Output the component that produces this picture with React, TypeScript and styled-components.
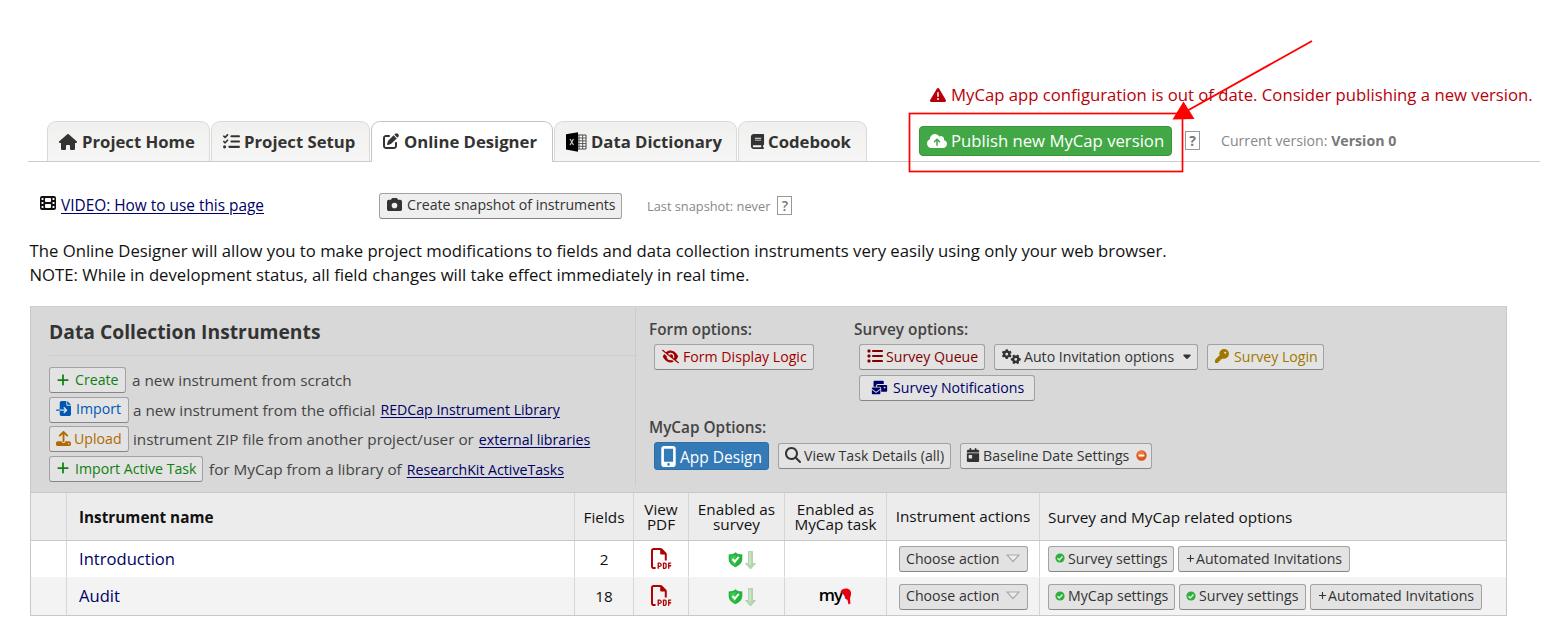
import React from 'react';
import styled, { createGlobalStyle, css } from 'styled-components';
import {
  FaHouse, FaListCheck, FaPenToSquare, FaBook, FaTriangleExclamation, FaCloudArrowUp, FaFilm, FaCamera,
  FaPlus, FaFileImport, FaUpload, FaEyeSlash, FaList, FaGears, FaKey, FaEnvelopesBulk, FaMobileScreenButton,
  FaMagnifyingGlass, FaCalendarDay, FaRegFilePdf, FaCaretDown,
} from 'react-icons/fa6';

const Global = createGlobalStyle`
  *, *::before, *::after { box-sizing: border-box; }
  body { margin: 0; background: #fff; color: #111; font-family: 'Open Sans', 'Noto Sans', sans-serif; font-size: 16.7px; }
  svg { display: block; flex: none; }
`;

const Page = styled.div`
  position: relative;
  width: 1559px;
  height: 641px;
  overflow: hidden;
  padding-top: 82px;
`;

const Txt = styled.span<{ $s?: number; $w?: number; $c?: string; $ml?: number; $up?: number }>`
  white-space: pre;
  ${p => p.$s && css`font-size: ${p.$s}px;`}
  ${p => p.$w && css`font-weight: ${p.$w};`}
  ${p => p.$c && css`color: ${p.$c};`}
  ${p => p.$ml && css`margin-left: ${p.$ml}px;`}
  ${p => p.$up && css`margin-bottom: ${p.$up}px;`}
`;

const Warning = styled.div`
  display: flex;
  align-items: center;
  gap: 5px;
  height: 25px;
  margin-left: 930px;
  color: #b8000b;
`;

const TabBar = styled.nav`
  display: flex;
  align-items: flex-end;
  height: 47px;
  margin: 8px 19px 0 28px;
  padding: 7px 0 0 19px;
  gap: 1px;
  border-bottom: 1px solid #ccc;
`;

const Tab = styled.div<{ $width: number; $active?: boolean; $gap?: number }>`
  display: flex;
  align-items: center;
  width: ${p => p.$width}px;
  height: ${p => (p.$active ? 41 : 40)}px;
  margin-bottom: ${p => (p.$active ? -1 : 0)}px;
  padding: 0 0 ${p => (p.$active ? 2 : 0)}px 11px;
  gap: ${p => p.$gap ?? 5}px;
  border: 1px solid ${p => (p.$active ? '#c4c4c4' : '#d9d9d9')};
  border-bottom: 0;
  border-radius: 9px 9px 0 0;
  background: ${p => (p.$active ? '#fff' : 'linear-gradient(#f0f0ee, #f6f6f6)')};
  color: #333;
  font-weight: 700;
  white-space: nowrap;
`;

const PublishArea = styled.div`
  display: flex;
  align-items: center;
  height: 30px;
  margin: 0 0 5px 51px;
`;

const PublishButton = styled.button`
  display: flex;
  align-items: center;
  gap: 4px;
  width: 253px;
  height: 30px;
  padding: 0 0 1px 7px;
  border: 1px solid #38953c;
  border-radius: 4px;
  background: #42a845;
  color: #fff;
  font: 400 16.72px 'Open Sans', sans-serif;
  white-space: nowrap;
`;

const Help = styled.span<{ $bold?: boolean }>`
  display: flex;
  align-items: center;
  justify-content: center;
  width: 15px;
  height: 19px;
  border: 1px solid #999;
  color: #777;
  font-size: 14px;
  font-weight: ${p => (p.$bold ? 700 : 600)};
`;

const SnapshotRow = styled.div`
  display: flex;
  align-items: center;
  height: 27px;
  margin: 30px 0 0 40px;
`;

const VideoLink = styled.div`
  display: flex;
  align-items: center;
  gap: 5px;
  width: 339px;
  margin-bottom: 1px;
  svg { margin-top: -4px; }
`;

const Link = styled.a<{ $s?: number; $ml?: number }>`
  margin-left: ${p => p.$ml ?? 1}px;
  color: #000066;
  text-decoration: underline;
  text-underline-offset: 2px;
  font-size: ${p => p.$s ?? 14.15}px;
  white-space: pre;
`;

const Button = styled.button<{ $w: number; $c?: string; $bg?: string; $gap?: number; $p?: number; $h?: number; $pb?: number }>`
  display: flex;
  align-items: center;
  flex: none;
  width: ${p => p.$w}px;
  height: ${p => p.$h ?? 26}px;
  gap: ${p => p.$gap ?? 5}px;
  padding: 0 0 ${p => p.$pb ?? 2}px ${p => p.$p ?? 7}px;
  border: 1px solid #a2a2a2;
  border-bottom-color: #858585;
  border-radius: 3px;
  background: ${p => p.$bg ?? '#e3e3e3'};
  color: ${p => p.$c ?? '#333'};
  font: 400 14.15px 'Open Sans', sans-serif;
  white-space: pre;
`;

const Intro = styled.p`
  margin: 20px 0 0 29.5px;
  line-height: 24px;
`;

const Panel = styled.section`
  width: 1477px;
  height: 310px;
  margin: 19px 0 0 30px;
  border: 1px solid #c8c8c8;
  border-top-color: #d0d0d0;
`;

const PanelHead = styled.div`
  display: flex;
  height: 185px;
  background: #d8d8d8;
`;

const CreateColumn = styled.div`
  width: 605px;
  height: 178px;
  margin-top: 1px;
  padding-left: 18px;
  border-right: 1px solid #cccccc;
`;

const PanelTitle = styled.h2`
  height: 48px;
  margin: 0 0 9.5px;
  padding-top: 10px;
  border-bottom: 1px solid #cccccc;
  color: #333;
  font-size: 19.3px;
  font-weight: 700;
  line-height: 27px;
`;

const CreateRow = styled.div`
  display: flex;
  align-items: center;
  height: 29.6px;
  color: #444;
  font-size: 15.3px;
`;

const OptionsColumn = styled.div`
  padding: 9px 0 0 13px;
`;

const OptionGroups = styled.div`
  display: grid;
  grid-template-columns: 205px auto;
  height: 98px;
  align-items: start;
`;

const GroupLabel = styled.div`
  height: 28px;
  color: #444;
  font-size: 15.35px;
  font-weight: 600;
  line-height: 26px;
`;

const ButtonRow = styled.div<{ $gap?: number; $mt?: number }>`
  display: flex;
  align-items: center;
  gap: ${p => p.$gap ?? 9}px;
  margin: ${p => p.$mt ?? 0}px 0 0 5px;
`;

const AppDesign = styled(Button)`
  padding: 1px 0 0 6px;
  border: 1px solid #2e6da4;
  background: #337ab7;
  color: #fff;
  font-size: 15.5px;
  svg { margin: 0 -3px 0 -3px; }
`;

const Row = styled.div<{ $h: number; $bg: string; $line?: string }>`
  display: grid;
  grid-template-columns: 36px 508px 59px 55px 96px 102px 153px 1fr;
  height: ${p => p.$h}px;
  background: ${p => p.$bg};
  border-top: 1px solid ${p => p.$line ?? p.$bg};
`;

const Cell = styled.div<{ $left?: boolean; $pt?: number; $pb?: number }>`
  display: flex;
  align-items: center;
  justify-content: ${p => (p.$left ? 'flex-start' : 'center')};
  padding: ${p => p.$pt ?? 0}px 0 ${p => p.$pb ?? 0}px ${p => (p.$left ? 12 : 0)}px;
  border-right: 1px solid #d6d6d6;
  font-size: 15.3px;
  line-height: 15px;
  text-align: center;
  white-space: pre;
`;

const OptionsCell = styled(Cell)`
  justify-content: flex-start;
  gap: 4px;
  padding-left: 8px;
  border-right: 0;
`;

const Annotation = styled.svg`
  position: absolute;
  left: 0;
  top: 0;
  pointer-events: none;
`;

const ExcelIcon = () => (
  <svg width="21" height="20" viewBox="0 0 21 20">
    <path d="M10 3h10v14H10z" fill="#fff" stroke="#444" />
    <path d="M10 6h10M10 8.800h10M10 11.600h10M10 14.300h10M13 3v14M16.700 3v14" stroke="#555" strokeWidth="1" />
    <path d="M0 2.200 12 .3v19.400L0 17.600z" fill="#000" />
    <path d="m4 7 3.500 6M7.500 7 4 13" stroke="#ccc" strokeWidth="1.200" />
  </svg>
);

const MinusDot = () => (
  <svg width="11" height="11" viewBox="0 0 10 10">
    <circle cx="5" cy="5" r="4.700" fill="#dd5517" />
    <circle cx="4.500" cy="4" r="3" fill="#f49355" opacity=".6" />
    <path d="M2.400 5h5.200" stroke="#fff" strokeWidth="1.700" />
  </svg>
);

const CheckDot = () => (
  <svg width="10" height="10" viewBox="0 0 10 10">
    <circle cx="5" cy="5" r="4.600" fill="#2fae3e" />
    <path d="m2.500 5.200 1.800 1.700 3.200-3.500" fill="none" stroke="#d5f5d5" strokeWidth="1.500" />
  </svg>
);

const ShieldWrap = styled.span`
  margin: 1px 0 0 11px;
`;

const SurveyEnabled = () => (
  <ShieldWrap>
    <svg width="28" height="20" viewBox="0 0 28 20">
      <path d="M.7 4.600C4 4.500 6 3.800 7.500 2.300 9 3.800 11 4.500 14.300 4.600V9c0 4-3.300 6.500-6.800 8.200C4 15.500.7 13 .7 9z" fill="#21b53a" />
      <path d="M2.500 6c2-.1 3.800-.8 5-1.800V15.500C4.500 14 2.500 12 2.500 9z" fill="#52d163" opacity=".65" />
      <path d="m4.500 9 2.300 2.600 4-4.800" fill="none" stroke="#fff" strokeWidth="2.100" />
      <path d="M20.500 1.500h4v12h3L22.500 19l-5-5.500h3z" fill="#b5d8b0" stroke="#a2caa0" strokeWidth=".7" />
      <path d="M22 2.500v12" stroke="#d8ecd5" strokeWidth="1.300" />
    </svg>
  </ShieldWrap>
);

const MyCapLogo = styled.div`
  display: flex;
  align-items: center;
  padding-bottom: 4px;
  color: #000;
  font-size: 17px;
  letter-spacing: -0.8px;
  svg { margin: 4px 0 0 -2px; }
`;

const MyCapMark = () => (
  <MyCapLogo>
    <Txt $w={600}>my</Txt>
    <svg width="12" height="17" viewBox="0 0 12 17">
      <path d="M.5 4C1 1.500 3.500.500 6 .500 9.500.500 11.500 3 11 6.500c-.2 1.800-.9 3-1 4.500l.5 4.500-2 1L7.500 12 5 10.500C5 7 3 6 .5 4z" fill="#e60012" />
    </svg>
  </MyCapLogo>
);

const Choose = () => (
  <Button $w={129} $bg="#e2e2e2" $gap={7} $p={6.5}>
    Choose action
    <svg width="14" height="9" viewBox="0 0 14 9">
      <path d="M1 1h12L7 7.500z" fill="#eee" stroke="#aaa" strokeWidth="1.200" />
    </svg>
  </Button>
);

const Pdf = () => <FaRegFilePdf size={21} color="#b00000" />;

export default function App() {
  return (
    <Page>
      <Global />
      <Warning>
        <FaTriangleExclamation size={16} />
        <Txt $s={16.72}>MyCap app configuration is out of date. Consider publishing a new version.</Txt>
      </Warning>

      <TabBar>
        <Tab $width={163}><FaHouse size={18} /><Txt>Project Home</Txt></Tab>
        <Tab $width={159} $gap={4}><FaListCheck size={17} /><Txt>Project Setup</Txt></Tab>
        <Tab $width={182} $active><FaPenToSquare size={16} /><Txt>Online Designer</Txt></Tab>
        <Tab $width={183} $gap={4}><ExcelIcon /><Txt>Data Dictionary</Txt></Tab>
        <Tab $width={129} $gap={3}><FaBook size={15} /><Txt>Codebook</Txt></Tab>
        <PublishArea>
          <PublishButton><FaCloudArrowUp size={20} />Publish new MyCap version</PublishButton>
          <Txt $ml={13} $up={2}><Help $bold>?</Help></Txt>
          <Txt $s={14.15} $c="#888" $ml={21} $up={2}>Current version: <Txt $w={700} $c="#777">Version 0</Txt></Txt>
        </PublishArea>
      </TabBar>

      <SnapshotRow>
        <VideoLink><FaFilm size={16} /><Link $s={15.4} $ml={0}>VIDEO: How to use this page</Link></VideoLink>
        <Button $w={243} $bg="#efefef" $gap={5}><FaCamera size={15} />Create snapshot of instruments</Button>
        <Txt $s={12.8} $c="#888" $ml={25}>Last snapshot: never</Txt>
        <Txt $ml={7}><Help>?</Help></Txt>
      </SnapshotRow>

      <Intro>
        The Online Designer will allow you to make project modifications to fields and data collection instruments very easily using only your web browser.
        <br />
        NOTE: While in development status, all field changes will take effect immediately in real time.
      </Intro>

      <Panel>
        <PanelHead>
          <CreateColumn>
            <PanelTitle>Data Collection Instruments</PanelTitle>
            <CreateRow>
              <Button $w={77} $p={6} $pb={1} $c="#108010"><FaPlus size={14} />Create</Button>
              <Txt $ml={6}>a new instrument from scratch</Txt>
            </CreateRow>
            <CreateRow>
              <Button $w={80} $p={6} $c="#0056b3"><FaFileImport size={15} />Import</Button>
              <Txt $ml={4}>a new instrument from the official </Txt><Link>REDCap Instrument Library</Link>
            </CreateRow>
            <CreateRow>
              <Button $w={80} $p={6} $pb={1} $c="#b06a00" $gap={3}><FaUpload size={15} />Upload</Button>
              <Txt $ml={4}>instrument ZIP file from another project/user or </Txt><Link>external libraries</Link>
            </CreateRow>
            <CreateRow>
              <Button $w={154} $p={6} $c="#108010"><FaPlus size={14} />Import Active Task</Button>
              <Txt $ml={6}>for MyCap from a library of </Txt><Link>ResearchKit ActiveTasks</Link>
            </CreateRow>
          </CreateColumn>

          <OptionsColumn>
            <OptionGroups>
              <div>
                <GroupLabel>Form options:</GroupLabel>
                <ButtonRow><Button $w={160} $c="#a00000" $gap={4}><FaEyeSlash size={17} />Form Display Logic</Button></ButtonRow>
              </div>
              <div>
                <GroupLabel>Survey options:</GroupLabel>
                <ButtonRow>
                  <Button $w={126} $c="#800000" $gap={3}><FaList size={16} />Survey Queue</Button>
                  <Button $w={204} $gap={3}><FaGears size={19} />Auto Invitation options <FaCaretDown size={12} /></Button>
                  <Button $w={117} $c="#a07800"><FaKey size={14} />Survey Login</Button>
                </ButtonRow>
                <ButtonRow $mt={5}>
                  <Button $w={176} $c="#000066" $p={11}><FaEnvelopesBulk size={17} />Survey Notifications</Button>
                </ButtonRow>
              </div>
            </OptionGroups>
            <GroupLabel>MyCap Options:</GroupLabel>
            <ButtonRow>
              <AppDesign $w={115} $h={28} $gap={4}><FaMobileScreenButton size={21} />App Design</AppDesign>
              <Button $w={173} $p={6} $gap={3}><FaMagnifyingGlass size={16} />View Task Details (all)</Button>
              <Button $w={192} $p={5} $gap={3}><FaCalendarDay size={14} />Baseline Date Settings <MinusDot /></Button>
            </ButtonRow>
          </OptionsColumn>
        </PanelHead>

        <Row $h={48} $bg="#ececec" $line="#c8c8c8">
          <Cell />
          <Cell $left $pt={2}><Txt $w={700}>Instrument name</Txt></Cell>
          <Cell $pt={2}>Fields</Cell>
          <Cell>{'View\nPDF'}</Cell>
          <Cell>{'Enabled as\nsurvey'}</Cell>
          <Cell>{'Enabled as\nMyCap task'}</Cell>
          <Cell>Instrument actions</Cell>
          <OptionsCell $pt={2}>Survey and MyCap related options</OptionsCell>
        </Row>
        <Row $h={37} $bg="#ffffff" $line="#c8c8c8">
          <Cell />
          <Cell $left $pb={2}><Txt $s={16.6} $c="#000066">Introduction</Txt></Cell>
          <Cell>2</Cell>
          <Cell $pb={1}><Pdf /></Cell>
          <Cell><SurveyEnabled /></Cell>
          <Cell />
          <Cell><Choose /></Cell>
          <OptionsCell>
            <Button $w={126} $p={6} $gap={3}><CheckDot />Survey settings</Button>
            <Button $w={172} $gap={1}><FaPlus size={9} />Automated Invitations</Button>
          </OptionsCell>
        </Row>
        <Row $h={38} $bg="#f3f3f3">
          <Cell />
          <Cell $left $pb={2}><Txt $s={16.6} $c="#000066">Audit</Txt></Cell>
          <Cell>18</Cell>
          <Cell $pb={2}><Pdf /></Cell>
          <Cell><SurveyEnabled /></Cell>
          <Cell><MyCapMark /></Cell>
          <Cell><Choose /></Cell>
          <OptionsCell>
            <Button $w={127} $p={6} $gap={3}><CheckDot />MyCap settings</Button>
            <Button $w={127} $p={6} $gap={3}><CheckDot />Survey settings</Button>
            <Button $w={172} $gap={1}><FaPlus size={9} />Automated Invitations</Button>
          </OptionsCell>
        </Row>
      </Panel>

      <Annotation width="1559" height="200" viewBox="0 0 1559 200">
        <rect x="909.5" y="113.500" width="273" height="58" fill="none" stroke="#f00" strokeWidth="1.700" />
        <path d="M1312 41 1185 112" stroke="#f00" strokeWidth="1.900" />
        <path d="m1172.500 119.500 11-18 11 17.500z" fill="#f00" />
      </Annotation>
    </Page>
  );
}
